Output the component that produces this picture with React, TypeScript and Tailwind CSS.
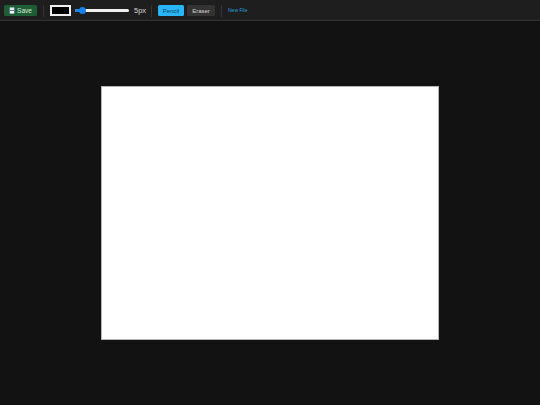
export default function App() {
  return (
    <div className="flex h-[405px] w-[540px] flex-col overflow-hidden bg-[#121212] font-['Liberation_Sans',sans-serif]">
      {/* Toolbar */}
      <div className="flex h-[21px] shrink-0 items-center border-b border-[#333333] bg-[#1e1e1e] pl-1">
        <button className="mt-px flex h-[11.5px] w-[33px] items-center justify-center gap-[2px] rounded-[1.5px] bg-[#1e5e34] text-[6.5px] leading-none text-[#d8e6dc]">
          <svg width="6" height="7" viewBox="0 0 6 7">
            <rect x="0" y="0.5" width="6" height="6" fill="#5f7f8f" />
            <rect x="1" y="0.5" width="4" height="2.5" fill="#e8e8e8" />
            <rect x="1" y="4" width="4" height="2.5" fill="#f5f5f5" />
          </svg>
          <span className="mt-px">Save</span>
        </button>
        <div className="ml-[6px] mt-px h-3 w-px bg-[#333333]" />
        <div className="ml-[6px] mt-px h-[11px] w-[21px] border-2 border-[#f0f0f0] bg-black" />
        <div className="relative ml-1 mt-px h-[7px] w-[54px]">
          <div className="absolute left-0 right-0 top-[2px] h-[3px] rounded-full bg-[#efefef]" />
          <div className="absolute left-0 top-[2px] h-[3px] w-[6px] rounded-l-full bg-[#1a82e8]" />
          <div className="absolute left-[4px] top-0 size-[7px] rounded-full bg-[#1a82e8]" />
        </div>
        <span className="ml-[5px] mt-px w-[11px] whitespace-nowrap text-[7.5px] leading-none text-[#d5d5d5]">5px</span>
        <div className="ml-[6px] mt-px h-3 w-px bg-[#333333]" />
        <button className="ml-[6px] mt-px h-[11.5px] w-[26px] rounded-[1.5px] bg-[#29b6f6] text-[6px] leading-none text-[#10405a]">Pencil</button>
        <button className="ml-[3px] mt-px h-[11.5px] w-[28px] rounded-[1.5px] bg-[#333333] text-[6px] leading-none text-[#d5d5d5]">Eraser</button>
        <div className="ml-[6px] mt-px h-3 w-px bg-[#333333]" />
        <a className="ml-[6px] mt-px text-[5px] leading-none text-[#29a0dc]">New File</a>
      </div>

      {/* Canvas area */}
      <div className="flex flex-1 items-center justify-center">
        <div className="h-[254px] w-[338px] border border-[#b5b5b5] bg-white" />
      </div>
    </div>
  );
}
